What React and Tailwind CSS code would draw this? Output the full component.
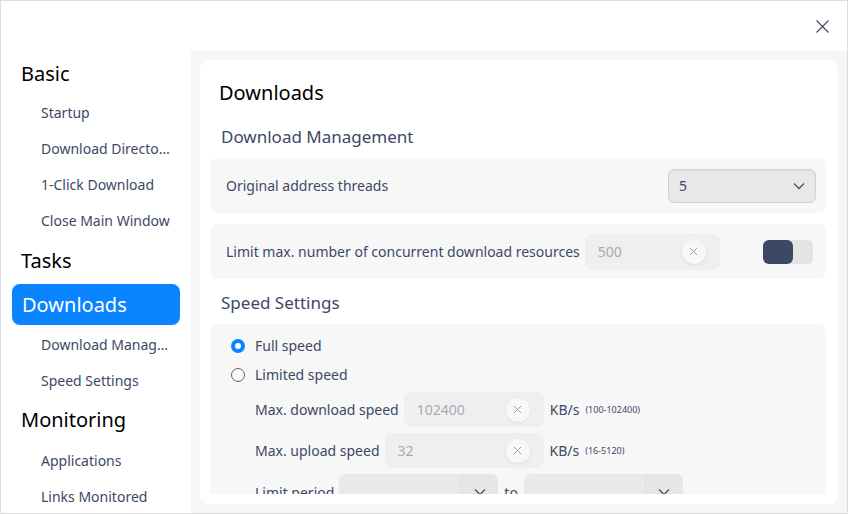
import React from "react";

const font = { fontFamily: '"Noto Sans", "Open Sans", sans-serif' };

const Chevron = ({ className = "" }) => (
  <svg className={className} width="12" height="8" viewBox="0 0 12 8" fill="none">
    <path d="M1 1.5L6 6.5L11 1.5" stroke="#4a5368" strokeWidth="1.3" />
  </svg>
);

const ClearBtn = () => (
  <div className="flex h-[24px] w-[24px] items-center justify-center rounded-full bg-[#f8f8f8] shadow-[0_1px_3px_rgba(0,0,0,0.08)]">
    <svg width="9" height="9" viewBox="0 0 9 9" fill="none">
      <path d="M1 1L8 8M8 1L1 8" stroke="#9aa0ab" strokeWidth="1" />
    </svg>
  </div>
);

const NumInput = ({ value, width }) => (
  <div className={`flex h-[35px] items-center justify-between rounded-[7px] bg-[#efefef] pl-[13px] pr-[14px] ${width}`}>
    <span className="text-[14px] text-[#a7acb6]">{value}</span>
    <ClearBtn />
  </div>
);

const SideHead = ({ children, h }) => (
  <div className={`flex items-center pl-[20px] text-[20px] text-black ${h}`}>{children}</div>
);

const SideItem = ({ children }) => (
  <div className="flex h-[36px] items-center pl-[40px] pr-[20px] text-[14px] text-[#3d4866]">
    <span className="truncate">{children}</span>
  </div>
);

const EmptySelect = () => (
  <div className="flex h-[36px] w-[159px] overflow-hidden rounded-[7px] bg-[#e9e9e9]">
    <div className="flex-1" />
    <div className="flex w-[38px] items-start justify-center border-l border-[#e0e0e0] bg-[#e6e6e6] pt-[14px]">
      <Chevron />
    </div>
  </div>
);

export default function App() {
  return (
    <div style={font} className="flex h-[514px] w-[848px] flex-col overflow-hidden border border-[#dcdcdc] bg-white">
      <div className="flex h-[50px] shrink-0 items-center justify-end pr-[18px]">
        <svg width="13" height="13" viewBox="0 0 13 13" fill="none">
          <path d="M0.5 0.5L12.5 12.5M12.5 0.5L0.5 12.5" stroke="#3d4866" strokeWidth="1.1" />
        </svg>
      </div>
      <div className="flex min-h-0 flex-1">
        <div className="w-[190px] shrink-0 pt-[3px]">
          <SideHead h="h-[40px]">Basic</SideHead>
          <SideItem>Startup</SideItem>
          <SideItem>Download Directory</SideItem>
          <SideItem>1-Click Download</SideItem>
          <SideItem>Close Main Window</SideItem>
          <SideHead h="h-[46px]">Tasks</SideHead>
          <div className="mb-[1px] ml-[11px] flex h-[41px] w-[168px] items-center rounded-[8px] bg-[#0a84ff] pl-[10px] text-[20px] text-white">
            Downloads
          </div>
          <SideItem>Download Management</SideItem>
          <SideItem>Speed Settings</SideItem>
          <SideHead h="h-[44px]">Monitoring</SideHead>
          <SideItem>Applications</SideItem>
          <SideItem>Links Monitored</SideItem>
        </div>
        <div className="min-w-0 flex-1 bg-[#f6f6f6] p-[9px]">
          <div className="flex h-full flex-col rounded-[9px] bg-white pb-[10px]">
            <div className="min-h-0 flex-1 overflow-hidden pl-[10px] pr-[12px] pt-[19px]">
              <div className="pl-[9px] text-[20px] leading-[28px] text-black">Downloads</div>
              <div className="mt-[18px] pl-[11px] text-[17px] leading-[24px] text-[#3d4866]">Download Management</div>
              <div className="mt-[9px] flex h-[55px] items-center justify-between rounded-[8px] bg-[#f7f7f7] pl-[16px] pr-[10px]">
                <span className="text-[14px] text-[#3d4866]">Original address threads</span>
                <div className="flex h-[34px] w-[148px] items-center justify-between rounded-[6px] border border-[#d2d2d2] bg-[#e8e8e8] pl-[10px] pr-[10px] shadow-[inset_0_1px_2px_rgba(0,0,0,0.05)]">
                  <span className="text-[14px] text-[#3d4866]">5</span>
                  <Chevron />
                </div>
              </div>
              <div className="mt-[11px] flex h-[55px] items-center rounded-[8px] bg-[#f7f7f7] pl-[16px] pr-[13px]">
                <span className="text-[14px] text-[#3d4866]">Limit max. number of concurrent download resources</span>
                <div className="ml-[5px]">
                  <NumInput value="500" width="w-[135px] h-[36px]" />
                </div>
                <div className="ml-auto flex h-[24px] w-[50px] rounded-[6px] bg-[#e3e3e3]">
                  <div className="h-[24px] w-[30px] rounded-[6px] bg-[#3d4866]" />
                </div>
              </div>
              <div className="mt-[12px] pl-[11px] text-[17px] leading-[24px] text-[#3d4866]">Speed Settings</div>
              <div className="mt-[9px] rounded-[8px] bg-[#f7f7f7] pb-[12px] pl-[21px] pt-[7px]">
                <div className="flex h-[29px] items-center gap-[10px]">
                  <div className="flex h-[14px] w-[14px] items-center justify-center rounded-full bg-[#0a84ff]">
                    <div className="h-[6px] w-[6px] rounded-full bg-white" />
                  </div>
                  <span className="text-[14px] text-[#3d4866]">Full speed</span>
                </div>
                <div className="flex h-[29px] items-center gap-[10px]">
                  <div className="h-[14px] w-[14px] rounded-full border border-[#5a6275]" />
                  <span className="text-[14px] text-[#3d4866]">Limited speed</span>
                </div>
                <div className="pl-[24px]">
                  <div className="mt-[3px] flex items-center">
                    <span className="text-[14px] text-[#3d4866]">Max. download speed</span>
                    <div className="ml-[5px]">
                      <NumInput value="102400" width="w-[140px]" />
                    </div>
                    <span className="ml-[6px] text-[14px] text-[#3d4866]">KB/s</span>
                    <span className="ml-[6px] text-[9px] text-[#3d4866]">(100-102400)</span>
                  </div>
                  <div className="mt-[6px] flex items-center">
                    <span className="text-[14px] text-[#3d4866]">Max. upload speed</span>
                    <div className="ml-[5px]">
                      <NumInput value="32" width="w-[159px]" />
                    </div>
                    <span className="ml-[6px] text-[14px] text-[#3d4866]">KB/s</span>
                    <span className="ml-[6px] text-[9px] text-[#3d4866]">(16-5120)</span>
                  </div>
                  <div className="mt-[6px] flex items-center">
                    <span className="text-[14px] text-[#3d4866]">Limit period</span>
                    <div className="ml-[5px]">
                      <EmptySelect />
                    </div>
                    <span className="ml-[6px] text-[14px] text-[#3d4866]">to</span>
                    <div className="ml-[6px]">
                      <EmptySelect />
                    </div>
                  </div>
                </div>
              </div>
            </div>
          </div>
        </div>
      </div>
    </div>
  );
}
